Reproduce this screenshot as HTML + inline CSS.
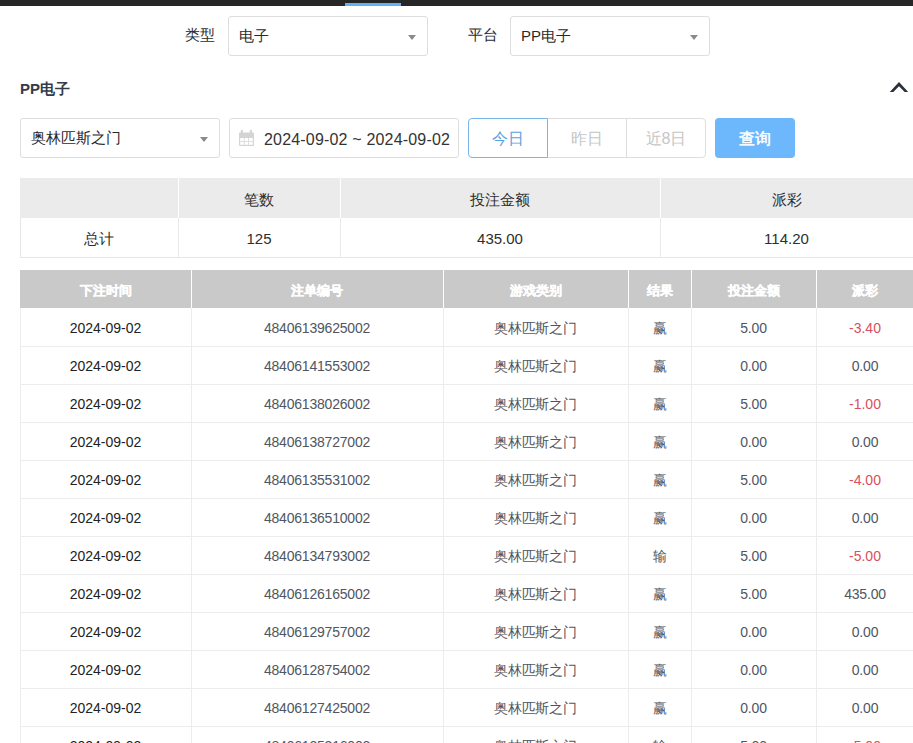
<!DOCTYPE html>
<html><head><meta charset="utf-8">
<style>
*{box-sizing:border-box;margin:0;padding:0}
html,body{width:913px;height:743px;overflow:hidden;background:#fff;font-family:"Liberation Sans",sans-serif;color:#333}
div{position:absolute}
.topbar{left:0;top:0;width:913px;height:6px;background:#262626}
.topbar .ind{left:345px;top:3px;width:56px;height:3px;background:#64b0f2}
.lbl{font-size:15px;color:#2c2c2c;line-height:20px;white-space:nowrap}
.sel{height:40px;border:1px solid #dedede;border-radius:3px;background:#fff;font-size:15px;color:#2a2a2a;line-height:38px;padding-left:10px;white-space:nowrap}
.sel .arr{right:11px;top:18px;width:0;height:0;border-left:4.5px solid transparent;border-right:4.5px solid transparent;border-top:5px solid #8a8a8a}
.title{left:20px;top:79px;font-size:15px;font-weight:bold;color:#343c4a;line-height:20px;white-space:nowrap}
.date{left:229px;top:118px;width:230px;height:40px;border:1px solid #dedede;border-radius:3px;font-size:16px;color:#333;line-height:41px;padding-left:34px;letter-spacing:0.18px;white-space:nowrap}
.btn{top:118px;height:40px;border:1px solid #dedede;font-size:16px;color:#c6c6c6;line-height:40px;text-align:center;white-space:nowrap}
.btn.act{border-color:#7ab6ea;color:#5aa2e2;z-index:2}
.query{left:715px;top:118px;width:80px;height:40px;border-radius:4px;background:#6db7fd;color:#fff;font-size:16px;line-height:41px;text-align:center;-webkit-text-stroke:0.5px #fff}
.sh{left:20px;top:178px;width:900px;height:40px;background:#ebebeb}
.sd{left:20px;top:218px;width:900px;height:40px;border-left:1px solid #e6e6e6;border-bottom:1px solid #e6e6e6}
.sw{top:178px;width:1px;height:40px;background:#fff}
.sv{top:218px;width:1px;height:39px;background:#e9e9e9}
.sc{height:40px;line-height:40px;text-align:center;font-size:15px;color:#2e2e2e;white-space:nowrap}
.mh{left:20px;top:270px;width:900px;height:38px;background:#c9c9c9}
.th{top:270px;height:38px;line-height:41px;text-align:center;color:#fff;font-size:13px;font-weight:bold;-webkit-text-stroke:0.35px #fff;white-space:nowrap}
.vw{top:270px;width:1px;height:38px;background:#fff}
.vl{top:308px;width:1px;height:440px;background:#ececec}
.hl{left:20px;width:900px;height:1px;background:#ececec}
.td{height:38px;line-height:40px;text-align:center;font-size:14px;white-space:nowrap}
.td.d{color:#222}
.td.n,.td.g{color:#4f5662;letter-spacing:-0.2px}
.td.red{color:#d94f5c}
</style></head><body>
<div class="topbar"><div class="ind"></div></div>
<div class="lbl" style="left:185px;top:25px">类型</div>
<div class="sel" style="left:228px;top:16px;width:200px">电子<div class="arr"></div></div>
<div class="lbl" style="left:468px;top:25px">平台</div>
<div class="sel" style="left:510px;top:16px;width:200px">PP电子<div class="arr"></div></div>
<div class="title">PP电子</div>
<svg style="position:absolute;left:0;top:0" width="913" height="160"><path d="M899 82 L908.2 92 L904.7 92 L899 86.2 L893.3 92 L889.8 92 Z" fill="#2b303a"/></svg>
<div class="sel" style="left:20px;top:118px;width:200px">奥林匹斯之门<div class="arr"></div></div>
<div class="date">2024-09-02 ~ 2024-09-02</div>
<svg style="position:absolute;left:0;top:0" width="300" height="160"><g fill="#d4d4d4"><rect x="239" y="132.5" width="15" height="13.5" rx="1"/><rect x="240.8" y="129.8" width="2.2" height="4.5" rx="1"/><rect x="249.8" y="129.8" width="2.2" height="4.5" rx="1"/></g><rect x="240.2" y="138" width="12.6" height="6.8" fill="#fff"/><g fill="#dedede"><rect x="243.8" y="138" width="1" height="6.8"/><rect x="248" y="138" width="1" height="6.8"/><rect x="240.2" y="141" width="12.6" height="1"/></g></svg>
<div class="btn act" style="left:468px;width:80px;border-radius:4px 0 0 4px">今日</div>
<div class="btn" style="left:547px;width:80px">昨日</div>
<div class="btn" style="left:626px;width:80px;border-radius:0 4px 4px 0">近8日</div>
<div class="query">查询</div>
<div class="sh"></div>
<div class="sd"></div>
<div class="sw" style="left:178px"></div><div class="sw" style="left:340px"></div><div class="sw" style="left:660px"></div>
<div class="sv" style="left:178px"></div><div class="sv" style="left:340px"></div><div class="sv" style="left:660px"></div>
<div class="sc" style="left:178px;top:180px;width:162px">笔数</div>
<div class="sc" style="left:340px;top:180px;width:320px">投注金额</div>
<div class="sc" style="left:660px;top:180px;width:253px">派彩</div>
<div class="sc" style="left:20px;top:219px;width:158px">总计</div>
<div class="sc" style="left:178px;top:219px;width:162px">125</div>
<div class="sc" style="left:340px;top:219px;width:320px">435.00</div>
<div class="sc" style="left:660px;top:219px;width:253px">114.20</div>
<div class="mh"></div>
<div class="th" style="left:20px;width:171px">下注时间</div>
<div class="th" style="left:191px;width:252px">注单编号</div>
<div class="th" style="left:443px;width:185px">游戏类别</div>
<div class="th" style="left:628px;width:63px">结果</div>
<div class="th" style="left:691px;width:125px">投注金额</div>
<div class="th" style="left:816px;width:98px">派彩</div>
<div class="vw" style="left:191px"></div>
<div class="vw" style="left:443px"></div>
<div class="vw" style="left:628px"></div>
<div class="vw" style="left:691px"></div>
<div class="vw" style="left:816px"></div>
<div class="td d" style="top:308px;left:20px;width:171px">2024-09-02</div>
<div class="td n" style="top:308px;left:191px;width:252px">48406139625002</div>
<div class="td g" style="top:308px;left:443px;width:185px">奥林匹斯之门</div>
<div class="td g" style="top:308px;left:628px;width:63px">赢</div>
<div class="td n" style="top:308px;left:691px;width:125px">5.00</div>
<div class="td red" style="top:308px;left:816px;width:98px">-3.40</div>
<div class="hl" style="top:346px"></div>
<div class="td d" style="top:346px;left:20px;width:171px">2024-09-02</div>
<div class="td n" style="top:346px;left:191px;width:252px">48406141553002</div>
<div class="td g" style="top:346px;left:443px;width:185px">奥林匹斯之门</div>
<div class="td g" style="top:346px;left:628px;width:63px">赢</div>
<div class="td n" style="top:346px;left:691px;width:125px">0.00</div>
<div class="td n" style="top:346px;left:816px;width:98px">0.00</div>
<div class="hl" style="top:384px"></div>
<div class="td d" style="top:384px;left:20px;width:171px">2024-09-02</div>
<div class="td n" style="top:384px;left:191px;width:252px">48406138026002</div>
<div class="td g" style="top:384px;left:443px;width:185px">奥林匹斯之门</div>
<div class="td g" style="top:384px;left:628px;width:63px">赢</div>
<div class="td n" style="top:384px;left:691px;width:125px">5.00</div>
<div class="td red" style="top:384px;left:816px;width:98px">-1.00</div>
<div class="hl" style="top:422px"></div>
<div class="td d" style="top:422px;left:20px;width:171px">2024-09-02</div>
<div class="td n" style="top:422px;left:191px;width:252px">48406138727002</div>
<div class="td g" style="top:422px;left:443px;width:185px">奥林匹斯之门</div>
<div class="td g" style="top:422px;left:628px;width:63px">赢</div>
<div class="td n" style="top:422px;left:691px;width:125px">0.00</div>
<div class="td n" style="top:422px;left:816px;width:98px">0.00</div>
<div class="hl" style="top:460px"></div>
<div class="td d" style="top:460px;left:20px;width:171px">2024-09-02</div>
<div class="td n" style="top:460px;left:191px;width:252px">48406135531002</div>
<div class="td g" style="top:460px;left:443px;width:185px">奥林匹斯之门</div>
<div class="td g" style="top:460px;left:628px;width:63px">赢</div>
<div class="td n" style="top:460px;left:691px;width:125px">5.00</div>
<div class="td red" style="top:460px;left:816px;width:98px">-4.00</div>
<div class="hl" style="top:498px"></div>
<div class="td d" style="top:498px;left:20px;width:171px">2024-09-02</div>
<div class="td n" style="top:498px;left:191px;width:252px">48406136510002</div>
<div class="td g" style="top:498px;left:443px;width:185px">奥林匹斯之门</div>
<div class="td g" style="top:498px;left:628px;width:63px">赢</div>
<div class="td n" style="top:498px;left:691px;width:125px">0.00</div>
<div class="td n" style="top:498px;left:816px;width:98px">0.00</div>
<div class="hl" style="top:536px"></div>
<div class="td d" style="top:536px;left:20px;width:171px">2024-09-02</div>
<div class="td n" style="top:536px;left:191px;width:252px">48406134793002</div>
<div class="td g" style="top:536px;left:443px;width:185px">奥林匹斯之门</div>
<div class="td g" style="top:536px;left:628px;width:63px">输</div>
<div class="td n" style="top:536px;left:691px;width:125px">5.00</div>
<div class="td red" style="top:536px;left:816px;width:98px">-5.00</div>
<div class="hl" style="top:574px"></div>
<div class="td d" style="top:574px;left:20px;width:171px">2024-09-02</div>
<div class="td n" style="top:574px;left:191px;width:252px">48406126165002</div>
<div class="td g" style="top:574px;left:443px;width:185px">奥林匹斯之门</div>
<div class="td g" style="top:574px;left:628px;width:63px">赢</div>
<div class="td n" style="top:574px;left:691px;width:125px">5.00</div>
<div class="td n" style="top:574px;left:816px;width:98px">435.00</div>
<div class="hl" style="top:612px"></div>
<div class="td d" style="top:612px;left:20px;width:171px">2024-09-02</div>
<div class="td n" style="top:612px;left:191px;width:252px">48406129757002</div>
<div class="td g" style="top:612px;left:443px;width:185px">奥林匹斯之门</div>
<div class="td g" style="top:612px;left:628px;width:63px">赢</div>
<div class="td n" style="top:612px;left:691px;width:125px">0.00</div>
<div class="td n" style="top:612px;left:816px;width:98px">0.00</div>
<div class="hl" style="top:650px"></div>
<div class="td d" style="top:650px;left:20px;width:171px">2024-09-02</div>
<div class="td n" style="top:650px;left:191px;width:252px">48406128754002</div>
<div class="td g" style="top:650px;left:443px;width:185px">奥林匹斯之门</div>
<div class="td g" style="top:650px;left:628px;width:63px">赢</div>
<div class="td n" style="top:650px;left:691px;width:125px">0.00</div>
<div class="td n" style="top:650px;left:816px;width:98px">0.00</div>
<div class="hl" style="top:688px"></div>
<div class="td d" style="top:688px;left:20px;width:171px">2024-09-02</div>
<div class="td n" style="top:688px;left:191px;width:252px">48406127425002</div>
<div class="td g" style="top:688px;left:443px;width:185px">奥林匹斯之门</div>
<div class="td g" style="top:688px;left:628px;width:63px">赢</div>
<div class="td n" style="top:688px;left:691px;width:125px">0.00</div>
<div class="td n" style="top:688px;left:816px;width:98px">0.00</div>
<div class="hl" style="top:726px"></div>
<div class="td d" style="top:726px;left:20px;width:171px">2024-09-02</div>
<div class="td n" style="top:726px;left:191px;width:252px">48406125316002</div>
<div class="td g" style="top:726px;left:443px;width:185px">奥林匹斯之门</div>
<div class="td g" style="top:726px;left:628px;width:63px">输</div>
<div class="td n" style="top:726px;left:691px;width:125px">5.00</div>
<div class="td red" style="top:726px;left:816px;width:98px">-5.00</div>
<div class="hl" style="top:764px"></div>
<div class="vl" style="left:20px"></div>
<div class="vl" style="left:191px"></div>
<div class="vl" style="left:443px"></div>
<div class="vl" style="left:628px"></div>
<div class="vl" style="left:691px"></div>
<div class="vl" style="left:816px"></div>
</body></html>
